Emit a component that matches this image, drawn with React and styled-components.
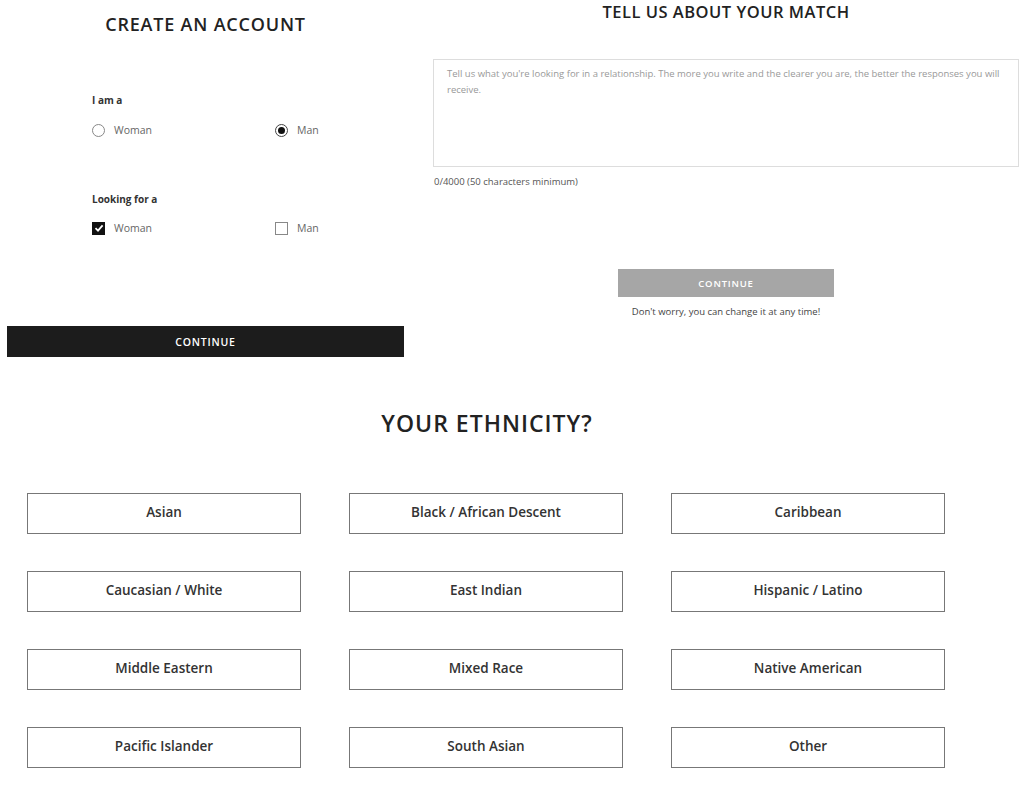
import styled, { createGlobalStyle } from 'styled-components';

const GlobalStyle = createGlobalStyle`
  html, body {
    margin: 0;
    padding: 0;
    background: #fff;
  }
  body {
    font-family: "Open Sans", "Liberation Sans", sans-serif;
    color: #222;
  }
`;

const ETHNICITIES = [
  'Asian',
  'Black / African Descent',
  'Caribbean',
  'Caucasian / White',
  'East Indian',
  'Hispanic / Latino',
  'Middle Eastern',
  'Mixed Race',
  'Native American',
  'Pacific Islander',
  'South Asian',
  'Other',
];

const Page = styled.div`
  width: 1024px;
  height: 785px;
  overflow: hidden;
`;

const Top = styled.div`
  display: grid;
  grid-template-columns: 420px 604px;
  height: 380px;
`;

const LeftPanel = styled.section`
  display: flex;
  flex-direction: column;
  width: 397px;
  padding-left: 7px;
`;

const RightPanel = styled.section`
  display: flex;
  flex-direction: column;
  width: 586px;
  padding-left: 13px;
`;

const Title = styled.h1`
  margin: ${(p) => p.$margin || '0'};
  text-align: center;
  font-size: ${(p) => p.$size || '18px'};
  line-height: ${(p) => p.$lh || '24px'};
  font-weight: 600;
  letter-spacing: ${(p) => p.$ls || '0.8px'};
  color: #222;
  text-transform: uppercase;
`;

const Form = styled.div`
  display: flex;
  flex-direction: column;
  padding-left: 85px;
  margin-top: 57px;
`;

const GroupLabel = styled.div`
  font-size: 10px;
  line-height: 14px;
  font-weight: 700;
  color: #333;
  margin-top: ${(p) => p.$mt || '0'};
`;

const OptionRow = styled.div`
  display: grid;
  grid-template-columns: 183px 100px;
  margin-top: ${(p) => p.$mt || '16px'};
  height: 14px;
`;

const Option = styled.label`
  display: flex;
  align-items: center;
  gap: 9px;
  font-size: 10.5px;
  color: #666;
`;

const Radio = styled.span`
  box-sizing: border-box;
  width: 13px;
  height: 13px;
  border-radius: 50%;
  border: 1px solid ${(p) => (p.$checked ? '#444' : '#888')};
  display: flex;
  align-items: center;
  justify-content: center;
  &::after {
    content: '';
    width: 7px;
    height: 7px;
    border-radius: 50%;
    background: ${(p) => (p.$checked ? '#111' : 'transparent')};
  }
`;

const Check = styled.span`
  box-sizing: border-box;
  width: 13px;
  height: 13px;
  border: 1px solid ${(p) => (p.$checked ? '#111' : '#888')};
  background: ${(p) => (p.$checked ? '#111' : '#fff')};
  display: flex;
  align-items: center;
  justify-content: center;
`;

const Button = styled.button`
  display: block;
  border: none;
  padding: 0;
  font-family: inherit;
  font-weight: 600;
  letter-spacing: 0.8px;
  color: #fff;
  text-transform: uppercase;
  cursor: pointer;
  background: ${(p) => (p.$dark ? '#1c1c1c' : '#a6a6a6')};
  width: ${(p) => (p.$dark ? '397px' : '216px')};
  height: ${(p) => (p.$dark ? '31px' : '28px')};
  font-size: ${(p) => (p.$dark ? '10.5px' : '9.5px')};
  margin: ${(p) => p.$margin || '0'};
`;

const TextArea = styled.div`
  box-sizing: border-box;
  margin-top: 36px;
  height: 108px;
  border: 1px solid #ddd;
  padding: 6px 13px;
  font-size: 9.5px;
  line-height: 16px;
  color: #999;
`;

const Counter = styled.div`
  margin-top: 8px;
  padding-left: 1px;
  font-size: 9.5px;
  color: #555;
  line-height: 14px;
`;

const Note = styled.div`
  margin-top: 8px;
  text-align: center;
  font-size: 9.5px;
  color: #444;
  line-height: 14px;
`;

const Bottom = styled.section`
  display: flex;
  flex-direction: column;
`;

const Grid = styled.div`
  display: grid;
  grid-template-columns: repeat(3, 274px);
  column-gap: 48px;
  row-gap: 37px;
  padding-left: 27px;
  margin-top: 55px;
`;

const Choice = styled.button`
  box-sizing: border-box;
  height: 41px;
  padding: 0 0 3px;
  border: 1px solid #777;
  background: #fff;
  font-family: inherit;
  font-size: 13.5px;
  font-weight: 600;
  color: #333;
  cursor: pointer;
`;

const CheckMark = () => (
  <svg width="10" height="10" viewBox="0 0 10 10">
    <path d="M1.5 5.2 L4 7.6 L8.6 2.4" fill="none" stroke="#fff" strokeWidth="1.8" />
  </svg>
);

const App = () => {
  return (
    <Page>
      <GlobalStyle />
      <Top>
        <LeftPanel>
          <Title $margin="12px 0 0">Create an account</Title>
          <Form>
            <GroupLabel>I am a</GroupLabel>
            <OptionRow>
              <Option><Radio />Woman</Option>
              <Option><Radio $checked />Man</Option>
            </OptionRow>
            <GroupLabel $mt="55px">Looking for a</GroupLabel>
            <OptionRow $mt="15px">
              <Option><Check $checked><CheckMark /></Check>Woman</Option>
              <Option><Check />Man</Option>
            </OptionRow>
          </Form>
          <Button $dark $margin="91px 0 0">Continue</Button>
        </LeftPanel>
        <RightPanel>
          <Title $size="16.5px" $lh="22px" $margin="1px 0 0" $ls="0.5px">Tell us about your match</Title>
          <TextArea>
            Tell us what you're looking for in a relationship. The more you write and the clearer you are, the better the responses you will receive.
          </TextArea>
          <Counter>0/4000 (50 characters minimum)</Counter>
          <Button $margin="80px auto 0">Continue</Button>
          <Note>Don't worry, you can change it at any time!</Note>
        </RightPanel>
      </Top>
      <Bottom>
        <Title $size="23px" $lh="30px" $margin="28px 0 0 -50px" $ls="1px">Your ethnicity?</Title>
        <Grid>
          {ETHNICITIES.map((name) => (
            <Choice key={name}>{name}</Choice>
          ))}
        </Grid>
      </Bottom>
    </Page>
  );
};

export default App;
